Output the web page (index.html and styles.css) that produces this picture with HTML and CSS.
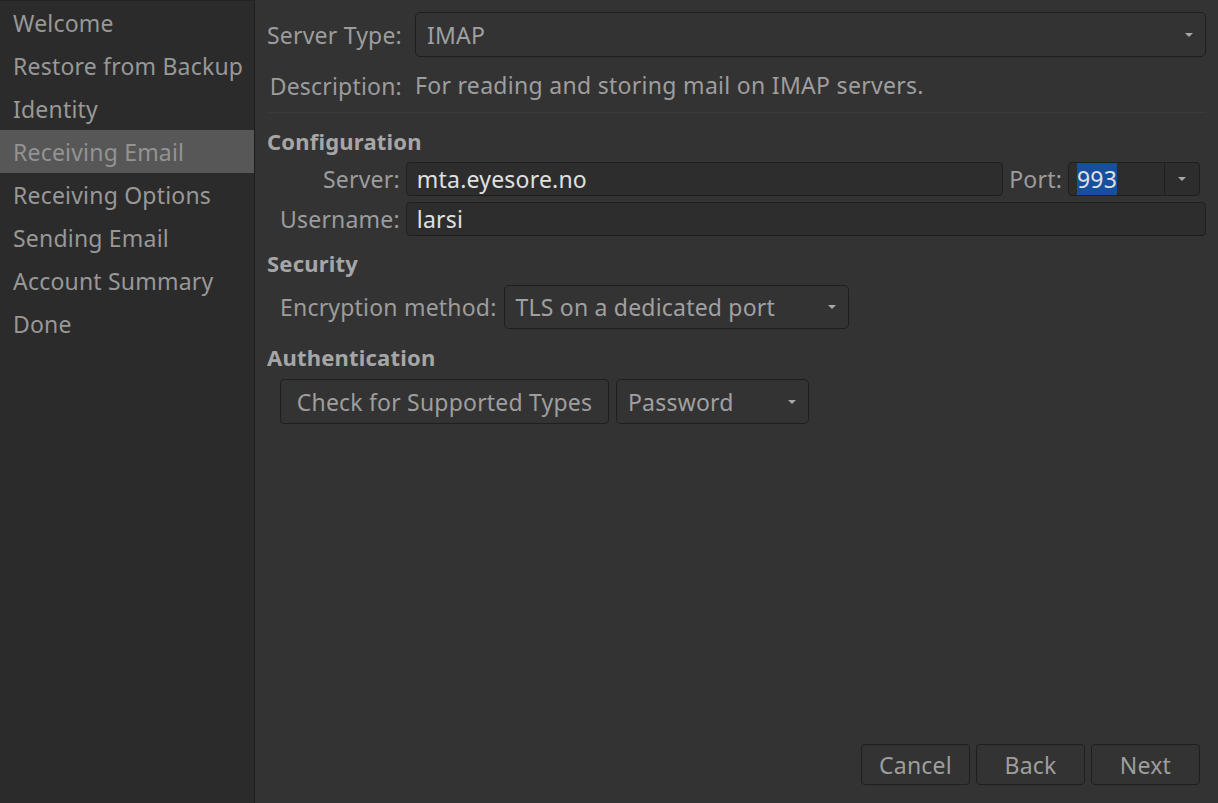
FILE: index.html
```html
<!DOCTYPE html>
<html lang="en">
<head>
    <meta charset="UTF-8">
    <title>Account Wizard</title>
    <link rel="stylesheet" href="styles.css">
</head>
<body>
    <div class="wizard">
        <div class="sidebar">
            <div class="step">Welcome</div>
            <div class="step">Restore from Backup</div>
            <div class="step">Identity</div>
            <div class="step active">Receiving Email</div>
            <div class="step">Receiving Options</div>
            <div class="step">Sending Email</div>
            <div class="step">Account Summary</div>
            <div class="step">Done</div>
        </div>

        <div class="main">
            <div class="top-grid">
                <div class="label">Server Type:</div>
                <div class="combo combo-wide">
                    <span>IMAP</span>
                    <span class="arrow"></span>
                </div>
                <div class="label">Description:</div>
                <div class="desc">For reading and storing mail on IMAP servers.</div>
            </div>
            <div class="separator"></div>

            <div class="section-title title-config">Configuration</div>
            <div class="config-grid">
                <div class="label">Server:</div>
                <div class="input">mta.eyesore.no</div>
                <div class="label">Port:</div>
                <div class="spin">
                    <div class="spin-value"><span class="selected">993</span></div>
                    <div class="spin-btn"><span class="arrow"></span></div>
                </div>
                <div class="label">Username:</div>
                <div class="input span-3">larsi</div>
            </div>

            <div class="section-title title-security">Security</div>
            <div class="row row-security">
                <div class="label">Encryption method:</div>
                <div class="combo combo-enc">
                    <span>TLS on a dedicated port</span>
                    <span class="arrow"></span>
                </div>
            </div>

            <div class="section-title title-auth">Authentication</div>
            <div class="row row-auth">
                <button class="btn btn-check">Check for Supported Types</button>
                <div class="combo combo-pass">
                    <span>Password</span>
                    <span class="arrow"></span>
                </div>
            </div>

            <div class="footer">
                <button class="btn btn-nav">Cancel</button>
                <button class="btn btn-nav">Back</button>
                <button class="btn btn-nav">Next</button>
            </div>
        </div>
    </div>
</body>
</html>
```

FILE: styles.css
```css
body {
    margin: 0;
    background: #333333;
    font-family: "Noto Sans", "DejaVu Sans", sans-serif;
    font-size: 23px;
    letter-spacing: 0.2px;
    color: #9c9c9c;
}
.wizard {
    display: flex;
    height: 803px;
    overflow: hidden;
}
.sidebar {
    width: 254px;
    flex-shrink: 0;
    background: #2b2b2b;
    border-top: 1px solid #232323;
    border-right: 1px solid #1e1e1e;
}
.step {
    height: 43px;
    line-height: 45px;
    padding-left: 13px;
    color: #989898;
    white-space: nowrap;
    overflow: hidden;
}
.step.active {
    background: #575757;
    color: #939393;
}
.main {
    flex: 1;
    display: flex;
    flex-direction: column;
    padding: 12px 12px 18px 12px;
}
.label {
    color: #9c9c9c;
    white-space: nowrap;
}
.top-grid {
    display: grid;
    grid-template-columns: auto 1fr;
    column-gap: 13px;
    row-gap: 6px;
    align-items: center;
}
.top-grid .label {
    justify-self: end;
}
.desc {
    height: 45px;
    line-height: 45px;
    color: #9e9e9e;
    letter-spacing: 0.3px;
}
.separator {
    height: 1px;
    background: #3a3a3a;
    margin-top: 4px;
}
.section-title {
    font-size: 22px;
    font-weight: bold;
    letter-spacing: 0.2px;
    color: #a6a6a6;
    height: 28px;
    line-height: 28px;
}
.title-config {
    margin-top: 14px;
}
.title-security {
    margin-top: 13px;
}
.title-auth {
    margin-top: 14px;
}
.combo {
    display: flex;
    align-items: center;
    justify-content: space-between;
    box-sizing: border-box;
    border: 1px solid #1f1f1f;
    border-radius: 5px;
    background: #333333;
    color: #a0a0a0;
    padding: 0 12px 0 11px;
    white-space: nowrap;
}
.combo-wide {
    height: 45px;
}
.combo-enc {
    width: 345px;
    height: 44px;
}
.combo-pass {
    width: 193px;
    height: 45px;
}
.arrow {
    width: 0;
    height: 0;
    border-left: 4px solid transparent;
    border-right: 4px solid transparent;
    border-top: 4px solid #a8a8a8;
}
.config-grid {
    display: grid;
    grid-template-columns: auto 1fr auto 138px;
    column-gap: 6px;
    row-gap: 6px;
    align-items: center;
    margin-top: 7px;
    margin-left: 13px;
}
.config-grid .label {
    justify-self: end;
}
.input {
    box-sizing: border-box;
    height: 34px;
    line-height: 32px;
    border: 1px solid #1f1f1f;
    border-radius: 4px;
    background: #2d2d2d;
    color: #e0e0e0;
    padding-left: 10px;
}
.span-3 {
    grid-column: span 3;
}
.spin {
    display: flex;
    box-sizing: border-box;
    height: 34px;
    margin-right: 6px;
    border: 1px solid #1f1f1f;
    border-radius: 4px;
    background: #2d2d2d;
}
.spin-value {
    flex: 1;
    line-height: 32px;
    padding-left: 8px;
    color: #e0e0e0;
}
.selected {
    background: #174f9f;
    display: inline-block;
    line-height: 32px;
}
.spin-btn {
    width: 34px;
    display: flex;
    align-items: center;
    justify-content: center;
    border-left: 1px solid #1f1f1f;
}
.row {
    display: flex;
    align-items: center;
    gap: 7px;
    margin-left: 13px;
}
.row-security {
    margin-top: 8px;
}
.row-auth {
    margin-top: 8px;
}
.btn {
    box-sizing: border-box;
    font-family: inherit;
    font-size: 23px;
    letter-spacing: 0.2px;
    color: #9e9e9e;
    background: #333333;
    border: 1px solid #1f1f1f;
    border-radius: 4px;
    padding: 0;
    height: 45px;
}
.btn-check {
    width: 329px;
}
.footer {
    margin-top: auto;
    display: flex;
    justify-content: flex-end;
    gap: 6px;
    margin-right: 6px;
}
.btn-nav {
    width: 109px;
    height: 41px;
}
```
